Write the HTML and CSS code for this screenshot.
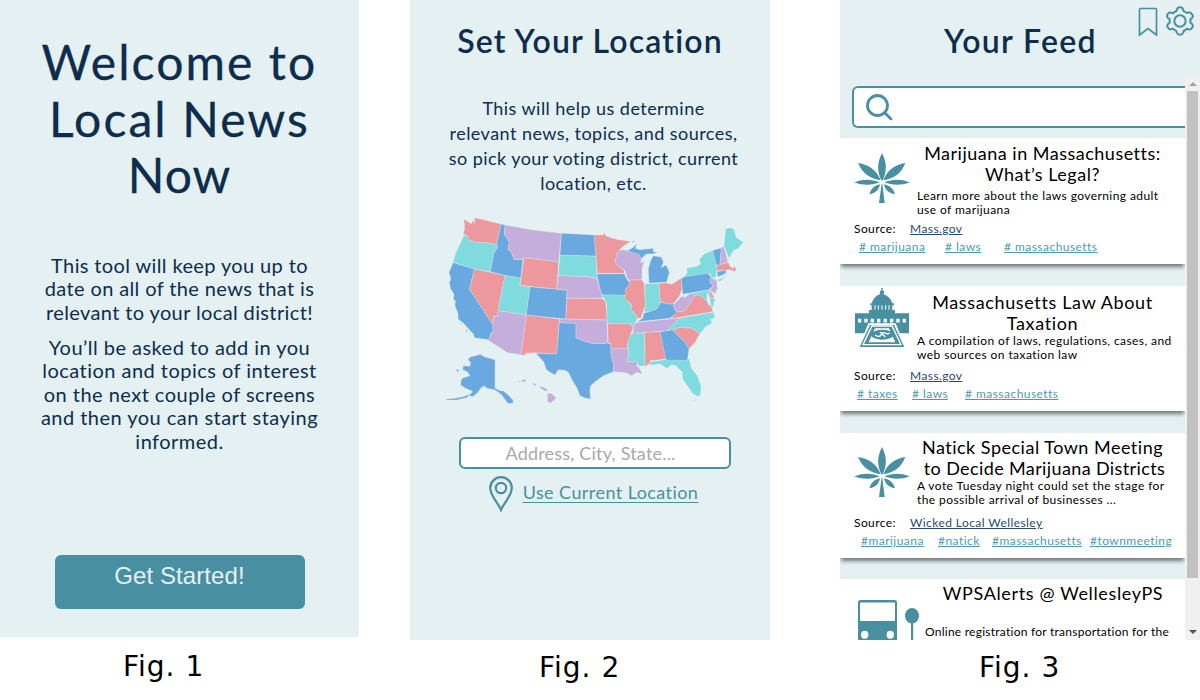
FILE: index.html
```html
<!DOCTYPE html>
<html lang="en">
<head>
<meta charset="utf-8">
<title>Local News Now</title>
<link rel="stylesheet" href="styles.css">
</head>
<body>
<svg class="defs" width="0" height="0">
  <symbol id="leaf" viewBox="0 0 166 150">
    <path d="M83 0C97 28 99 52 85 82H81C67 52 69 28 83 0Z"/>
    <path d="M11 30C44 35 67 51 79 82C46 76 25 62 11 30Z"/>
    <path d="M153 30C122 35 98 51 87 82C120 76 140 62 153 30Z"/>
    <path d="M0 88C28 77 54 79 76 88C54 97 28 99 0 88Z"/>
    <path d="M166 88C138 77 112 79 90 88C112 97 138 99 166 88Z"/>
    <path d="M45 124C50 106 61 97 77 94C74 110 65 120 45 124Z"/>
    <path d="M122 124C117 106 105 97 89 94C92 110 102 120 122 124Z"/>
    <path d="M82 92H84L91 150H74Z"/>
  </symbol>
</svg>
<main class="board">
  <figure class="fig">
    <section class="screen welcome">
      <h1 class="hero"><span class="l1">Welcome to</span><span class="l2">Local News</span><span class="l3">Now</span></h1>
      <div class="intro">
        <p><span>This tool will keep you up to</span><span>date on all of the news that is</span><span>relevant to your local district!</span></p>
        <p><span>You’ll be asked to add in you</span><span>location and topics of interest</span><span>on the next couple of screens</span><span>and then you can start staying</span><span>informed.</span></p>
      </div>
      <button class="start">Get Started!</button>
    </section>
    <figcaption class="cap1">Fig. 1</figcaption>
  </figure>

  <figure class="fig">
    <section class="screen location">
      <h2 class="title">Set Your Location</h2>
      <p class="help"><span>This will help us determine</span><span>relevant news, topics, and sources,</span><span>so pick your voting district, current</span><span>location, etc.</span></p>
      <svg class="map" viewBox="0 0 930 600">
        <g class="red">
          <path d="M72 30 84 38 94 44 99 34 104 46 104 26 183 45 170 106 140 101 108 100 88 95 82 80 70 74 74 60Z"/>
          <path d="M103 180 195 199 178 285 172 322 162 320 158 347 88 240Z"/>
          <path d="M252 146 356 158 350 241 240 229Z"/>
          <path d="M259 318 358 330 350 435 290 431 257 432 256 439 243 438Z"/>
          <path d="M381 268 487 269 497 278 501 333 377 330Z"/>
          <path d="M462 78H490L493 69 497 80 515 87 535 92 572 97 555 108 542 118 540 124 530 133 532 142 526 150V160L535 172 553 184V193H472L468 141Z"/>
          <path d="M503 344 574 344 574 350 582 352 574 368 570 385 563 400V418H513V403L505 402Z"/>
          <path d="M567 213 606 212 613 225 616 290 608 310 603 327 592 328 588 318 572 300 575 288 553 268 557 240 570 223Z"/>
          <path d="M657 223 680 222 695 226 724 208 726 240 718 262 700 284 685 285 660 278Z"/>
          <path d="M614 370 660 368 672 420 678 450 630 455 632 470 625 463 620 472 615 470Z"/>
          <path d="M697 363 720 355 755 357 780 374 765 400 747 420 735 400Z"/>
          <path d="M692 329 712 308 735 305 745 290 762 262 775 256 800 270 804 285 815 294 818 308 720 325Z"/>
          <path d="M829 170 865 160 870 172 880 179 882 171 888 178 885 188 870 182 829 185Z"/>
          <path d="M806 242 812 246 824 268 812 266Z"/>
        </g>
        <g class="teal">
          <path d="M72 78 82 80 88 95 108 100 140 101 170 106 174 114 162 132 151 188 103 180 39 161 46 135 60 105Z"/>
          <path d="M195 199 242 207 239 229 270 233 259 318 174 305Z"/>
          <path d="M360 138 468 141 471 210 463 208 447 203 355 200Z"/>
          <path d="M485 257 552 256 556 270 575 290 572 300 588 318 592 330 583 345 578 355 574 344 503 344 501 333 500 280Z"/>
          <path d="M575 373 613 371 615 470 595 472 593 459 560 458 566 440 563 400Z"/>
          <path d="M615 225 657 223 660 282 650 300 628 308 612 309 616 290Z"/>
          <path d="M632 458 678 452 742 455 747 448 755 480 772 500 783 530 782 555 775 563 760 555 745 535 728 510 727 490 705 468 695 468 680 478 660 465 632 468ZM757 577 775 570 758 575Z"/>
          <path d="M680 365 720 327 820 310 826 325 812 330 816 342 795 355 780 374 755 357 720 355 697 363Z"/>
          <path d="M730 205 742 192 740 178 772 172 782 165 778 152 792 135 820 124 828 150 830 190 826 208 815 205 810 193ZM832 214 860 200 840 217Z"/>
          <path d="M852 110 857 60 870 56 882 60 888 85 910 100 895 118 880 125 867 148Z"/>
          <path d="M745 256 806 242 812 266 825 270 818 297 813 292 810 270 802 250 800 278 788 265 775 256 762 262Z"/>
        </g>
        <g class="blue">
          <path d="M39 161 103 180 88 240 158 347 160 365 152 375 148 392 103 386 100 375 86 360 70 342 54 330V314L45 290 46 275 40 270 42 255 32 240 28 220 33 210 27 190Z"/>
          <path d="M183 45 195 48 193 75 208 100 204 122 214 128 222 152 249 151 242 207 195 199 151 188 162 132 174 114 170 106Z"/>
          <path d="M270 233 381 244 377 330 259 318Z"/>
          <path d="M364 73 462 78 468 141 360 138Z"/>
          <path d="M358 341 408 343V386L430 395 455 403 480 404 503 402 512 405 513 440 521 465 520 488 490 500 465 518 452 530 449 545 452 570 435 567 420 560 410 535 400 520 385 490 375 484 355 482 345 498 330 490 318 480 312 460 288 433 350 435Z"/>
          <path d="M470 195 553 194 560 210 570 223 557 240 555 258 485 257 480 240Z"/>
          <path d="M562 125 578 116 590 105 586 118 600 122 622 120 640 118 640 128 653 130 640 134 618 135 604 150 598 140 580 133ZM640 140 665 145 670 160 664 176 678 168 688 190 680 220 627 222 625 180 632 155ZM574 98 586 94 580 100Z"/>
          <path d="M592 338 608 328 612 312 628 308 650 300 662 280 685 285 700 284 703 300 712 310 690 328Z"/>
          <path d="M660 368 697 363 735 400 747 420 742 455 678 453Z"/>
          <path d="M724 208 735 203 804 193 818 210 810 220 820 232 806 242 728 256Z"/>
          <path d="M819 124 844 117 840 168 829 168Z"/>
          <path d="M831 188 858 183 858 193 834 204Z"/>
          <path d="M84 452 92 443 108 440 120 436 135 444 165 452V538L180 545 190 546 205 558 219 574V583L203 583 185 557 165 543 140 537 132 530 122 538 112 552 98 563 88 560 98 547 75 537 62 528 64 512 70 506 90 500 82 488 68 482 70 470 90 472 92 460ZM18 571 45 568 75 562 92 553 80 566 50 573 18 573ZM48 480 58 484 52 490ZM58 343 68 344 60 346ZM80 360 84 372 78 365Z"/>
        </g>
        <g class="purple">
          <path d="M195 48 280 63 364 73 356 158 252 146 249 151 222 152 214 128 204 122 208 100 193 75Z"/>
          <path d="M174 305 259 318 243 437 203 431 145 394 152 380 160 365 158 347 162 322 172 322Z"/>
          <path d="M355 200 447 203 471 210 480 240 488 268 381 268 381 244 350 241Z"/>
          <path d="M358 330 501 333 503 402 480 404 455 403 430 395 408 386V343L358 341Z"/>
          <path d="M513 418H563L566 440 560 458 593 459 590 472 597 475 607 495 590 490 575 500 560 492 545 490 520 488 521 465 513 440Z"/>
          <path d="M540 124 552 122 598 137 604 150 602 162 612 155 606 180 606 212 567 213 560 204 555 184 535 172 526 160V150L532 142 530 133Z"/>
          <path d="M583 345 592 340 690 330 720 327 680 365 578 373Z"/>
          <path d="M700 288 726 262 735 265 752 253 765 260 745 290 735 305 712 309 702 298Z"/>
          <path d="M844 117 850 110 864 158 840 167Z"/>
          <path d="M810 206 830 212 832 240 825 255 810 242 820 232 810 220Z"/>
          <path d="M246 512 257 510 257 519 247 519ZM276 521 289 526 284 532ZM298 532 310 534 323 542 318 548 305 540ZM323 552 336 554 348 568 332 582 322 577ZM236 515H242V519H236Z"/>
        </g>
      </svg>
      <div class="field">Address, City, State...</div>
      <a class="current">
        <svg class="pin" viewBox="0 0 24 36"><path d="M12 34C10 28 1.200 20 1.200 12A10.800 10.800 0 0 1 22.800 12C22.800 20 14 28 12 34Z"/><circle cx="12" cy="12" r="5.200"/></svg>
        <span>Use Current Location</span>
      </a>
    </section>
    <figcaption class="cap2">Fig. 2</figcaption>
  </figure>

  <figure class="fig">
    <section class="screen feed">
      <header class="bar">
        <h2>Your Feed</h2>
        <svg class="mark" viewBox="0 0 20 30"><path d="M1.500 28V2.500Q1.500 1.500 2.500 1.500H17.500Q18.500 1.500 18.500 2.500V28L10 21.500Z"/></svg>
        <svg class="gear" viewBox="0 0 84 88"><path d="M33 10Q34 3 42 3Q50 3 51 10L53 14Q58 17 63 20L69 18Q75 18 79 25Q83 31 77 36L73 39Q74 44 73 49L78 53Q83 58 78 65Q74 71 68 69L63 67Q57 72 53 74L51 80Q49 85 42 85Q35 85 33 80L31 74Q26 71 21 67L15 69Q9 70 6 64Q1 57 7 52L11 49V39L6 35Q1 30 5 23Q9 17 15 19L21 21Q26 16 31 14Z"/><circle cx="42" cy="44" r="17"/></svg>
      </header>
      <div class="scroller">
        <div class="list">
          <div class="search"><svg viewBox="0 0 27 27"><circle cx="11.500" cy="11.500" r="10"/><path d="M19 19 25 25"/></svg></div>

          <article class="card c1">
            <div class="top">
              <svg class="icon"><use href="#leaf"/></svg>
              <div class="body"><h3><span>Marijuana in Massachusetts:</span><span>What’s Legal?</span></h3>
              <p><span>Learn more about the laws governing adult</span><span>use of marijuana</span></p></div>
            </div>
            <div class="source"><span>Source:</span><a>Mass.gov</a></div>
            <div class="tags"><a># marijuana</a><a># laws</a><a># massachusetts</a></div>
          </article>

          <article class="card c2">
            <div class="top">
              <svg class="icon capitol" viewBox="0 0 162 177">
                <path d="M79 0H83V8H87V17H82Q106 24 112 46H117V52H112V66H120V76H162V136H0V76H42V66H50V52H46V46H50Q56 24 77 17H75V8H79Z"/>
                <path class="cut" d="M60 52V65M70 52V65M81 52V65M92 52V65M102 52V65"/>
                <path class="cut wide" d="M9 98H19M28 98H38M47 98H57M66 98H76M86 98H96M105 98H115M124 98H134M143 98H153"/>
                <path class="paper" d="M40 106H122L150 177H12Z"/>
                <path d="M45 111H117L148 177H14Z"/>
                <path class="cut thin" d="M51 114H111L138 170H24Z"/>
                <path class="paper" d="M60 121H102L121 163H41Z"/>
                <ellipse cx="82" cy="140" rx="34" ry="15"/>
                <path class="cut thin" d="M60 141Q74 150 79 140Q83 130 92 136Q96 140 104 135M75 132 91 147"/>
              </svg>
              <div class="body"><h3><span>Massachusetts Law About</span><span>Taxation</span></h3>
              <p><span>A compilation of laws, regulations, cases, and</span><span>web sources on taxation law</span></p></div>
            </div>
            <div class="source"><span>Source:</span><a>Mass.gov</a></div>
            <div class="tags"><a># taxes</a><a># laws</a><a># massachusetts</a></div>
          </article>

          <article class="card c3">
            <div class="top">
              <svg class="icon"><use href="#leaf"/></svg>
              <div class="body"><h3><span>Natick Special Town Meeting</span><span class="nudge">to Decide Marijuana Districts</span></h3>
              <p><span>A vote Tuesday night could set the stage for</span><span>the possible arrival of businesses ...</span></p></div>
            </div>
            <div class="source"><span>Source:</span><a>Wicked Local Wellesley</a></div>
            <div class="tags"><a>#marijuana</a><a>#natick</a><a>#massachusetts</a><a>#townmeeting</a></div>
          </article>

          <article class="card c4">
            <div class="top">
              <svg class="icon bus" viewBox="0 0 62 42"><rect x="0" y="0" width="39" height="42" rx="2.500"/><rect class="hole" x="2" y="2.500" width="35" height="18.500" rx="1"/><ellipse class="hole" cx="6.700" cy="34.700" rx="3.700" ry="4"/><ellipse class="hole" cx="32.300" cy="34.700" rx="3.700" ry="4"/><ellipse cx="54" cy="15.700" rx="7" ry="7.700"/><rect x="53" y="22" width="2.200" height="20"/></svg>
              <div class="body"><h3><span>WPSAlerts @ WellesleyPS</span></h3>
              <p><span>Online registration for transportation for the</span></p></div>
            </div>
          </article>
        </div>
        <div class="track"><i class="up"></i><i class="thumb"></i><i class="down"></i></div>
      </div>
    </section>
    <figcaption class="cap3">Fig. 3</figcaption>
  </figure>
</main>
</body>
</html>
```

FILE: styles.css
```css
* { box-sizing: border-box; }
body { margin: 0; background: #fff; font-family: Lato, "Open Sans", sans-serif; }
h1, h2, h3, p, figure { margin: 0; font-weight: 400; }
.defs { display: block; }
.board { display: grid; grid-template-columns: 359px 51px 360px 70px 360px; width: 1200px; height: 700px; overflow: hidden; }
.fig:nth-child(1) { grid-column: 1; }
.fig:nth-child(2) { grid-column: 3; }
.fig:nth-child(3) { grid-column: 5; }
.screen { height: 640px; background: #e5f0f2; color: #0c2d4e; overflow: hidden; display: flex; flex-direction: column; }
figcaption { font: 28px/34px "DejaVu Sans", sans-serif; letter-spacing: 1px; color: #000; }
.hero span, .intro span, .help span, .card h3 span, .card p span { display: block; white-space: nowrap; }

.welcome { height: 637px; align-items: center; }
.hero { margin-top: 34px; font-size: 48px; line-height: 56.500px; letter-spacing: 2.100px; text-align: center; -webkit-text-stroke: .3px; }
.hero .l3 { letter-spacing: 1px; }
.intro { margin-top: 50px; font-size: 20px; line-height: 23.500px; text-align: center; letter-spacing: .38px; }
.intro p + p { margin-top: 11.500px; letter-spacing: .47px; }
.start { margin-top: 101.500px; width: 250px; height: 54px; border: 0; border-radius: 6px; background: #4890a1; color: #e5f0f2; font: 24px/28px "Liberation Sans", Arial, sans-serif; letter-spacing: .1px; padding: 0 0 12px; }
.cap1 { padding: 13px 0 0 123px; }

.location { align-items: center; }
.title { margin-top: 21px; font-size: 32px; line-height: 40px; font-weight: 600; letter-spacing: 1.180px; white-space: nowrap; }
.help { margin-top: 35px; font-size: 18px; line-height: 25px; text-align: center; letter-spacing: .45px; margin-left: 7px; }
.map { margin: 13px 0 0 30px; width: 310px; height: 200px; flex: none; stroke: #e5f0f2; stroke-width: .8; stroke-linejoin: round; align-self: flex-start; }
.red { fill: #ec989d; }
.teal { fill: #80dbdf; }
.blue { fill: #69a9e0; }
.purple { fill: #c5aedb; }
.field { margin: 28px 0 0 10px; width: 272px; height: 32px; border: 2px solid #4890a1; border-radius: 6px; background: #fff; color: #a9a9a9; font-size: 18px; line-height: 29px; text-align: center; letter-spacing: .2px; padding-right: 9px; }
.current { display: flex; margin: 7px 0 0 7px; gap: 10px; color: #4890a1; font-size: 18px; line-height: 32px; letter-spacing: .43px; }
.current span { text-decoration: underline; text-decoration-thickness: 1px; text-underline-offset: 3px; white-space: nowrap; }
.pin { width: 24px; height: 36px; fill: none; stroke: #4890a1; stroke-width: 2.200; }
.cap2 { padding: 11px 0 0 129px; }

.bar { height: 76px; display: flex; align-items: flex-start; padding: 6px 6px 0 104px; }
.bar h2 { font-size: 32px; line-height: 40px; margin-top: 15px; font-weight: 600; letter-spacing: 1.350px; width: 192px; white-space: nowrap; }
.mark { width: 20px; height: 30px; margin: 1px 0 0 2px; fill: none; stroke: #4890a1; stroke-width: 1.700; }
.gear { width: 28px; height: 30px; margin-left: 8px; flex: none; fill: none; stroke: #4890a1; stroke-width: 6; }
.scroller { display: flex; flex: 1; min-height: 0; }
.list { width: 345px; overflow: hidden; }
.search { margin: 10px 0 10px 12px; height: 42px; border: 2px solid #4890a1; border-right: 0; border-radius: 6px 0 0 6px; background: #fff; padding: 6px 0 0 12px; }
.search svg { width: 27px; height: 27px; fill: none; stroke: #4890a1; stroke-width: 2.800; stroke-linecap: round; display: block; }
.card { background: #fff; color: #000; height: 126px; margin-bottom: 22px; box-shadow: 0 4px 4px -1px rgba(0,0,0,.5); font-size: 12px; display: flex; flex-direction: column; }
.c2, .c3 { height: 125px; }
.c3 { margin-bottom: 21px; }
.top { display: flex; height: 83px; padding-left: 14px; }
.icon { width: 56px; height: 50px; margin-top: 15px; flex: none; fill: #4890a1; }
.c3 .icon { margin-top: 14px; }
.capitol { width: 54px; height: 59px; margin: 2px 1px 0 1px; }
.cut { fill: none; stroke: #fff; stroke-width: 3; }
.wide { stroke-width: 11; }
.thin { stroke-width: 4; }
.paper, .hole { fill: #fff; }
.body { margin-left: 7px; width: 251px; padding-top: 5px; }
.card h3 { font-size: 18px; line-height: 21px; text-align: center; letter-spacing: .5px; }
.card p { line-height: 14px; letter-spacing: .42px; }
.c1 p { margin-top: 4px; }
.c2 .body { padding-top: 6px; }
.c2 h3 { letter-spacing: .64px; }
.c3 .body { padding-top: 4px; }
.c3 .nudge { letter-spacing: .38px; margin-left: 4px; }
.source { display: grid; grid-template-columns: 56px auto; justify-content: start; padding-left: 14px; line-height: 16px; white-space: nowrap; letter-spacing: .42px; }
.source a { color: #264a6e; text-decoration: underline; }
.tags { display: grid; line-height: 16px; margin-top: 2px; white-space: nowrap; color: #4e9bac; letter-spacing: .46px; justify-content: start; }
.tags a { text-decoration: underline; }
.c1 .tags { padding-left: 19px; grid-template-columns: 86px 59px auto; }
.c2 .tags { padding-left: 17px; grid-template-columns: 55px 53px auto; }
.c3 .tags { padding-left: 21px; grid-template-columns: 77px 54px 98px auto; }
.c2 .top, .c3 .top { height: 82px; }
.c4 { height: 130px; }
.c4 .icon { width: 62px; height: 42px; margin: 21px 0 0 4px; }
.c4 .body { margin-left: 5px; padding-top: 4px; }
.c4 h3 { letter-spacing: .64px; margin-left: 5px; }
.c4 p { margin-top: 21px; letter-spacing: .25px; }
.track { width: 15px; background: #f0f0f0; display: flex; flex-direction: column; align-items: center; }
.up { border: 4px solid transparent; border-top: 0; border-bottom: 4px solid #a3a3a3; margin-top: 6px; }
.thumb { width: 11px; height: 487px; margin-top: 5px; background: #c1c1c1; }
.down { border: 4px solid transparent; border-bottom: 0; border-top: 4px solid #505050; margin-top: 52px; }
.cap3 { padding: 11px 0 0 139px; }
```
